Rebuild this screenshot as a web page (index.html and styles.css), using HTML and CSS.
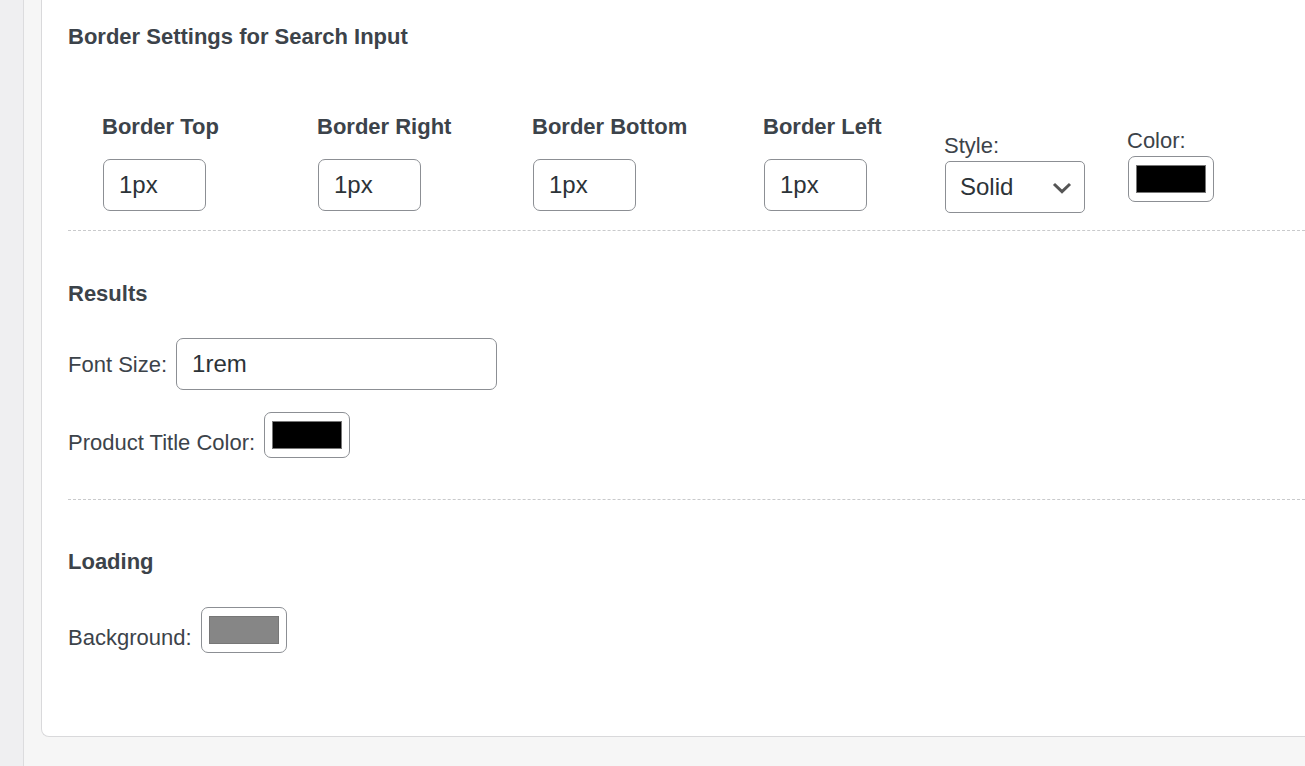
FILE: index.html
```html
<!DOCTYPE html>
<html lang="en">
<head>
<meta charset="utf-8">
<title>Search Settings</title>
<link rel="stylesheet" href="styles.css">
</head>
<body>
<main class="content">
  <form class="panel">
    <section class="section">
      <h2 class="title">Border Settings for Search Input</h2>
      <div class="border-grid">
        <div class="field">
          <label class="field-name" for="border-top">Border Top</label>
          <input class="text-input short" id="border-top" type="text" value="1px">
        </div>
        <div class="field">
          <label class="field-name" for="border-right">Border Right</label>
          <input class="text-input short" id="border-right" type="text" value="1px">
        </div>
        <div class="field">
          <label class="field-name" for="border-bottom">Border Bottom</label>
          <input class="text-input short" id="border-bottom" type="text" value="1px">
        </div>
        <div class="field">
          <label class="field-name" for="border-left">Border Left</label>
          <input class="text-input short" id="border-left" type="text" value="1px">
        </div>
        <div class="field style-field">
          <label for="border-style">Style:</label>
          <div class="select-wrap">
            <select class="select" id="border-style">
              <option>Solid</option>
              <option>Dashed</option>
              <option>Dotted</option>
            </select>
            <svg class="chevron" viewBox="0 0 24 24" aria-hidden="true"><path d="M4 8l8 7.6L20 8"/></svg>
          </div>
        </div>
        <div class="field color-field">
          <label for="border-color">Color:</label>
          <input class="color-input" id="border-color" type="color" value="#000000">
        </div>
      </div>
    </section>
    <section class="section">
      <h2 class="title">Results</h2>
      <div class="line text-line">
        <label for="font-size">Font Size:</label>
        <input class="text-input long" id="font-size" type="text" value="1rem">
      </div>
      <div class="line">
        <label for="title-color">Product Title Color:</label>
        <input class="color-input" id="title-color" type="color" value="#000000">
      </div>
    </section>
    <section class="section">
      <h2 class="title">Loading</h2>
      <div class="line">
        <label for="loading-background">Background:</label>
        <input class="color-input" id="loading-background" type="color" value="#868686">
      </div>
    </section>
  </form>
</main>
</body>
</html>
```
FILE: styles.css
```css
* {
  box-sizing: border-box;
}

body {
  margin: 0;
  padding-left: 23px;
  min-height: 100vh;
  display: flex;
  background: #efeff1;
  color: #3c434a;
  font-family: "Liberation Sans", Arial, sans-serif;
  font-size: 22px;
  line-height: 30px;
}

.content {
  flex: 1;
  min-width: 0;
  padding: 0 0 29px 17px;
  border-left: 1px solid #dcdcde;
  background: #f6f6f6;
}

.panel {
  padding: 22px 0 83px 26px;
  border: solid #d9d9db;
  border-width: 0 0 1px 1px;
  border-radius: 0 0 0 8px;
  background: #fff;
}

.section + .section {
  margin-top: 17px;
  padding-top: 48px;
  border-top: 1px dashed #c9cacc;
}

.section:nth-child(3) {
  margin-top: 41px;
  padding-top: 47px;
}

.title {
  margin: 0;
  font-size: 22px;
  font-weight: 700;
}

.border-grid {
  display: grid;
  grid-template-columns: 215px 215px 231px 181px 183px 1fr;
  align-items: start;
  padding: 60px 0 0 34px;
}

.field {
  display: flex;
  flex-direction: column;
  align-items: flex-start;
}

.field-name {
  margin-bottom: 17px;
  font-weight: 700;
}

.style-field {
  padding-top: 19px;
}

.color-field {
  padding-top: 14px;
}

.text-input,
.select {
  height: 52px;
  margin: 0 1px;
  padding: 0 15px;
  border: 1px solid #8c8f94;
  border-radius: 7px;
  background: #fff;
  color: #2c3338;
  font: 24px "Liberation Sans", Arial, sans-serif;
}

.short {
  width: 103px;
}

.long {
  width: 321px;
  margin: 0;
}

.select-wrap {
  position: relative;
}

.select {
  display: block;
  width: 140px;
  padding: 0 14px 2px;
  border-radius: 5px;
  appearance: none;
}

.chevron {
  position: absolute;
  top: 15px;
  right: 12px;
  width: 24px;
  height: 24px;
  fill: none;
  stroke: #555;
  stroke-width: 3;
  pointer-events: none;
}

.color-input {
  width: 86px;
  height: 46px;
  margin: 0;
  padding: 8px 7px;
  border: 1px solid #8c8f94;
  border-radius: 7px;
  background: #fff;
  appearance: none;
}

.color-field .color-input {
  margin-left: 1px;
}

.color-input::-webkit-color-swatch-wrapper {
  padding: 0;
}

.color-input::-webkit-color-swatch {
  border: 1px solid #777;
  border-radius: 0;
}

.line {
  display: flex;
  align-items: flex-end;
  gap: 9px;
  margin-top: 22px;
}

.title + .line {
  margin-top: 30px;
}

.title + .text-line {
  align-items: baseline;
  margin-top: 29px;
}
```
